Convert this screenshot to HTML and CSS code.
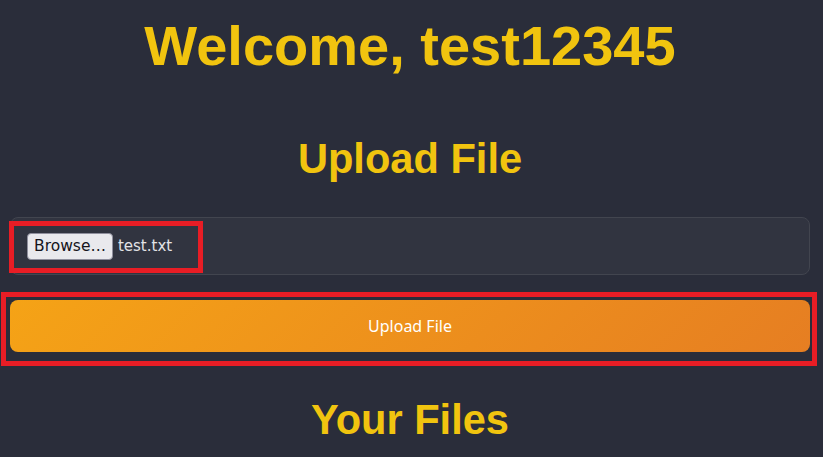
FILE: index.html
```html
<!DOCTYPE html>
<html lang="en">
<head>
<meta charset="utf-8">
<title>Dashboard</title>
<link rel="stylesheet" href="styles.css">
</head>
<body>
<main class="page">
  <h1 class="title">Welcome, test12345</h1>
  <section class="upload">
    <h2 class="section-title">Upload File</h2>
    <form class="upload-form">
      <div class="file-field">
        <span class="browse">Browse…</span>
        <span class="file-name">test.txt</span>
        <span class="mark mark-file"></span>
      </div>
      <div class="submit-wrap">
        <button type="button" class="submit">Upload File</button>
        <span class="mark mark-submit"></span>
      </div>
    </form>
  </section>
  <section class="files">
    <h2 class="section-title files-title">Your Files</h2>
  </section>
</main>
</body>
</html>
```

FILE: styles.css
```css
html, body {
  margin: 0;
  padding: 0;
  background: #2a2d3a;
}
body {
  padding: 0 10px;
  font-family: "Noto Sans", sans-serif;
  overflow: hidden;
}
.page {
  max-width: 800px;
}
.title {
  margin: 14px 0 0;
  font-family: "Liberation Sans", Arial, sans-serif;
  font-weight: 700;
  font-size: 56px;
  line-height: 64px;
  color: #f1c40f;
  text-align: center;
}
.section-title {
  margin: 57px 0 0;
  font-family: "Liberation Sans", Arial, sans-serif;
  font-weight: 700;
  font-size: 41.6px;
  line-height: 48px;
  color: #f1c40f;
  text-align: center;
}
.upload-form {
  display: flex;
  flex-direction: column;
  gap: 25px;
  margin-top: 34px;
}
.file-field {
  position: relative;
  display: flex;
  align-items: center;
  gap: 5px;
  height: 56px;
  padding: 0 16px;
  background: #313440;
  border: 1px solid #42454f;
  border-radius: 8px;
}
.browse {
  display: inline-flex;
  align-items: center;
  box-sizing: border-box;
  height: 27px;
  padding: 0 6px;
  background: #e9e9ed;
  border: 1px solid #8f8f9d;
  border-radius: 4px;
  color: #15141a;
  font-family: "DejaVu Sans", sans-serif;
  font-size: 15.5px;
}
.file-name {
  color: #e3e3e6;
  font-family: "DejaVu Sans", sans-serif;
  font-size: 15px;
}
.submit-wrap {
  position: relative;
}
.submit {
  display: block;
  width: 100%;
  height: 52px;
  border: none;
  border-radius: 8px;
  background: linear-gradient(135deg, #f5a316 0%, #e67e22 100%);
  color: #ffffff;
  font-family: "Noto Sans", sans-serif;
  font-size: 16px;
}
.mark {
  position: absolute;
  border: 5px solid #e81d25;
  pointer-events: none;
}
.mark-file {
  left: -2px;
  top: 3px;
  width: 184px;
  height: 42px;
}
.mark-submit {
  left: -9px;
  top: -8px;
  right: -7px;
  bottom: -14px;
}
.files-title {
  margin-top: 44px;
}
```
